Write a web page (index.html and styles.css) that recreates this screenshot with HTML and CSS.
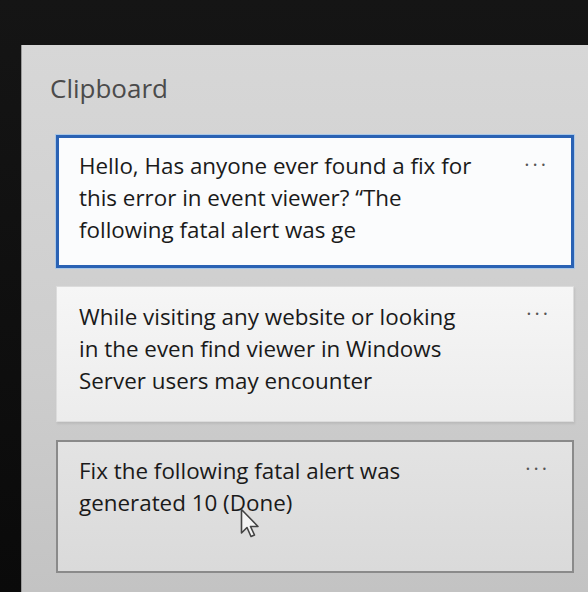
FILE: index.html
```html
<!DOCTYPE html>
<html>
<head>
<meta charset="utf-8">
<link rel="stylesheet" href="styles.css">
</head>
<body>
<div class="screen">
  <div class="panel">
    <h1 class="title">Clipboard</h1>
    <div class="list">
      <div class="card card-selected">
        <p class="text">Hello, Has anyone ever found a fix for this error in event viewer? “The following fatal alert was ge</p>
        <span class="more">···</span>
      </div>
      <div class="card card-plain">
        <p class="text">While visiting any website or looking in the even find viewer in Windows Server users may encounter</p>
        <span class="more">···</span>
      </div>
      <div class="card card-hover">
        <p class="text">Fix the following fatal alert was generated 10 (Done)</p>
        <span class="more">···</span>
        <svg class="cursor" width="22" height="32" viewBox="0 0 22 32">
          <path d="M1.5 1.5 L1.5 25 L7 19.5 L11 28.5 L14.5 27 L10.5 18.5 L18 18.5 Z" fill="#f4f4f4" stroke="#444" stroke-width="1.6" stroke-linejoin="round"/>
        </svg>
      </div>
    </div>
  </div>
</div>
</body>
</html>
```

FILE: styles.css
```css
html, body {
  margin: 0;
  padding: 0;
}
body {
  width: 588px;
  height: 592px;
  overflow: hidden;
  background: #0b0b0b;
  font-family: "Open Sans", "Noto Sans", sans-serif;
}
.screen {
  height: 592px;
  padding: 45px 0 0 21px;
  box-sizing: border-box;
  background: linear-gradient(180deg, #151515 0%, #0a0a0a 100%);
}
.panel {
  height: 100%;
  background: linear-gradient(180deg, #d7d7d7 0%, #cdcdcd 60%, #c3c3c3 100%);
  padding: 24px 14px 0 34px;
  box-sizing: border-box;
  border-left: 1px solid #9a9a9a;
}
.title {
  margin: 0 0 0 -6px;
  font-weight: 400;
  font-size: 26px;
  line-height: 38px;
  color: #4b4b4b;
}
.list {
  margin-top: 28px;
  display: flex;
  flex-direction: column;
  gap: 18px;
}
.card {
  position: relative;
  height: 133px;
  box-sizing: border-box;
  padding: 12px 60px 0 20px;
}
.card-selected {
  background: #fbfcfd;
  border: 3px solid #2a62b4;
  box-shadow: 0 0 0 1px #a9c7e6;
}
.card-plain {
  height: 136px;
  background: linear-gradient(180deg, #f6f6f6 0%, #ececec 100%);
  border: 1px solid #dcdcdc;
  box-shadow: 1px 2px 2px rgba(0, 0, 0, 0.08);
  padding: 14px 60px 0 22px;
}
.card-hover {
  background: linear-gradient(180deg, #e3e3e3 0%, #dadada 100%);
  border: 2px solid #8a8a8a;
  padding: 13px 60px 0 21px;
}
.text {
  margin: 0;
  max-width: 396px;
  font-size: 22.4px;
  line-height: 32px;
  color: #1a1a1a;
}
.more {
  position: absolute;
  top: 13px;
  right: 22px;
  font-size: 20px;
  letter-spacing: 3px;
  color: #555;
}
.cursor {
  position: absolute;
  left: 182px;
  top: 66px;
}
```
